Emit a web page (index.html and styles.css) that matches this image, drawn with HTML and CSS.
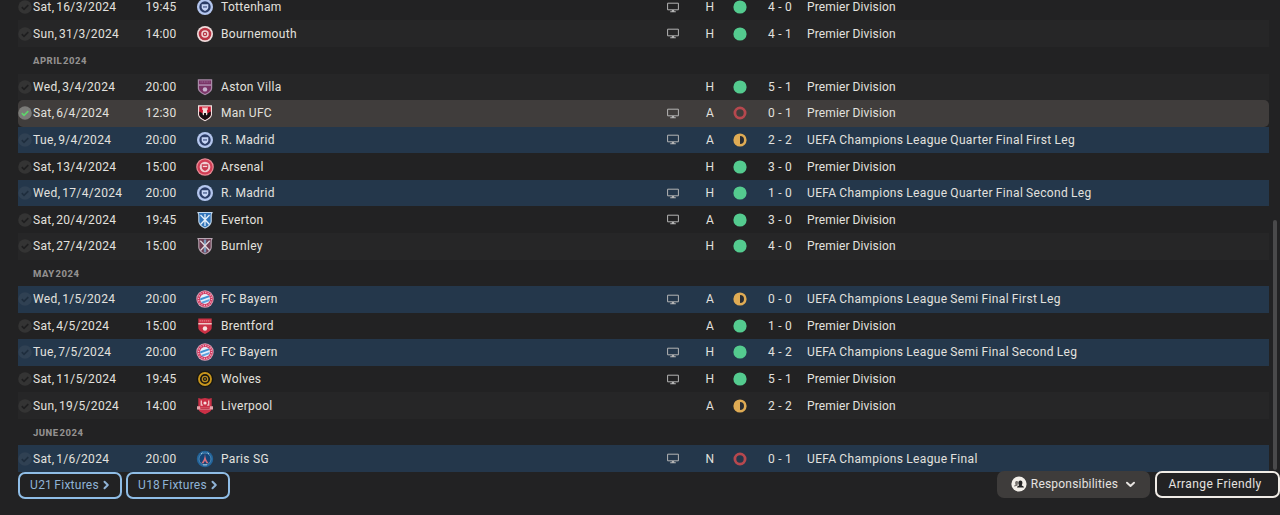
FILE: index.html
```html
<!DOCTYPE html>
<html lang="en">

<head>
    <meta charset="UTF-8">
    <meta name="viewport" content="width=device-width, initial-scale=1.0">
    <title>Fixtures</title>
    <link rel="stylesheet" href="styles.css">
</head>

<body>
    <!-- icons and crests -->
    <svg class="sprite" width="0" height="0">
        <symbol id="check" viewBox="0 0 14 14">
            <circle cx="7" cy="7" r="6.8" fill="var(--check-bg)" />
            <path d="M3.8 7.2l2.2 2.1 4.3-4.1" fill="none" stroke="var(--check-mark)" stroke-width="1.7" />
        </symbol>
        <symbol id="tv" viewBox="0 0 12 11">
            <path d="M.6 1.2h10.8v6.6H.6z" fill="none" stroke="currentColor" stroke-width="1" />
            <path d="M5 8h2l.3 1.3h1.5v.9H3.2v-.9h1.5z" fill="currentColor" />
        </symbol>
        <symbol id="win" viewBox="0 0 14 14">
            <circle cx="7" cy="7" r="6.6" fill="#54cb8f" />
        </symbol>
        <symbol id="loss" viewBox="0 0 14 14">
            <circle cx="7" cy="7" r="5.1" fill="none" stroke="#b6484e" stroke-width="2.8" />
        </symbol>
        <symbol id="draw" viewBox="0 0 14 14">
            <circle cx="7" cy="7" r="6.6" fill="#dfab54" />
            <path d="M7 3a4 4 0 0 1 0 8z" fill="#2a2d33" />
        </symbol>
        <symbol id="blue-round" viewBox="0 0 18 18">
            <circle cx="9" cy="9" r="8" fill="#b4c6ee" />
            <circle cx="9" cy="9" r="5.7" fill="#2b3c66" />
            <path d="M5.7 6.2h6.6v3.1c0 1.7-1.4 2.8-3.3 3.8-1.9-1-3.3-2.1-3.3-3.800z" fill="#c6d4f5" />
            <path d="M7 8.3h4v1.3H7z" fill="#4a5c8c" />
        </symbol>
        <symbol id="bournemouth" viewBox="0 0 18 18">
            <circle cx="9" cy="9" r="8" fill="#f0dcdc" />
            <circle cx="9" cy="9" r="6.3" fill="#b83443" />
            <circle cx="9" cy="9" r="3" fill="#b83443" stroke="#f0d5d6" stroke-width="1.5" />
            <circle cx="9" cy="9" r="1" fill="#f5e4e4" />
        </symbol>
        <symbol id="villa" viewBox="0 0 18 18">
            <path d="M1.8 1.3h14.4v8.7c0 3.3-3 5.2-7.2 7.2-4.2-2-7.2-3.9-7.2-7.2z" fill="#a98aa8" />
            <path d="M3 2.5h12v7.5c0 2.6-2.3 4.2-6 5.9-3.7-1.7-6-3.3-6-5.900z" fill="#7a3467" />
            <path d="M3 6.3h12v1.5H3z" fill="#b08db0" />
            <path d="M4.5 4h9" stroke="#a276a0" stroke-dasharray="1 .7" />
            <circle cx="9" cy="11.4" r="2.2" fill="#c8b2cf" />
        </symbol>
        <symbol id="manufc" viewBox="0 0 18 18">
            <path d="M2 1.3h14v8.900c0 3-2.9 5-7 7-4.1-2-7-4-7-7z" fill="#eee0df" />
            <path d="M3.2 2.5h11.6v7.7c0 2.300-2.300 3.900-5.800 5.700-3.500-1.800-5.800-3.400-5.800-5.700z" fill="#cc1730" />
            <path d="M3.2 7.500l2.800 1.500h6l2.800-1.500v2.900c0 2-2.300 3.700-5.800 5.500-3.500-1.800-5.800-3.500-5.800-5.500z" fill="#180f12" />
            <path d="M6.300 3.200h1.300v1h.8v-1h1.200v1h.8v-1h1.300v2.500l-.8.600.6 4-1.500 1.200V9H8v2.500l-1.500-1.200.6-4-.8-.6z" fill="#f4dfdc" />
        </symbol>
        <symbol id="arsenal" viewBox="0 0 18 18">
            <circle cx="9" cy="9" r="8.8" fill="#e98b96" />
            <circle cx="9" cy="9" r="7.6" fill="#d23e55" />
            <circle cx="9" cy="9" r="5.3" fill="#f0cdd1" />
            <path d="M5.8 6.2h6.4v3c0 1.7-1.4 2.8-3.2 3.7-1.8-.9-3.2-2-3.2-3.700z" fill="#c93b50" />
            <path d="M6.8 7.8h4.4v1.3H6.8z" fill="#f3d5d8" />
        </symbol>
        <symbol id="everton" viewBox="0 0 18 18">
            <path d="M2 1.5h14l-.8 2v6.700c0 3-2.300 5-6.200 6.800-3.900-1.800-6.200-3.800-6.200-6.800V3.500z" fill="#3375b9" stroke="#c3d9ee" stroke-width="1.1" />
            <path d="M9 3v12M4.5 4l9 9.5M13.5 4l-9 9.5" stroke="#e5f0fa" stroke-width="1.3" />
        </symbol>
        <symbol id="burnley" viewBox="0 0 18 18">
            <path d="M2 1.5h14l-.8 2v6.700c0 3-2.300 5-6.200 6.800-3.900-1.800-6.200-3.800-6.200-6.800V3.500z" fill="#6b3b50" stroke="#b9a6b3" stroke-width="1.1" />
            <path d="M9 2.5v13" stroke="#7998b8" stroke-width="2.4" />
            <path d="M4.3 3.8l9.200 9.700M13.700 3.800l-9.200 9.700" stroke="#e2d7dd" stroke-width="1.3" />
        </symbol>
        <symbol id="bayern" viewBox="0 0 18 18">
            <circle cx="9" cy="9" r="8.7" fill="#dba3b7" />
            <circle cx="9" cy="9" r="7.8" fill="#d23960" />
            <circle cx="9" cy="9" r="6.5" fill="none" stroke="#eeb9c7" stroke-width="1.3" stroke-dasharray="1.2 1.3" />
            <circle cx="9" cy="9" r="5" fill="#e4eefa" />
            <path d="M4.3 8.3l8.2-2.8 1.2 1.6-9.5 3.300z" fill="#3e8fd0" />
            <path d="M5 12l8.700-3-.6 2.300-6.400 2.300z" fill="#5ba2dc" />
        </symbol>
        <symbol id="brentford" viewBox="0 0 18 18">
            <path d="M2.3 1.5h13.4v9c0 2.9-2.7 4.5-6.7 6.5-4-2-6.700-3.600-6.700-6.500z" fill="#cb3145" />
            <path d="M2.3 6h13.400v1.500H2.3z" fill="#efc9c8" />
            <path d="M3.5 3.8h11" stroke="#e37a83" stroke-width="1.3" stroke-dasharray="1.4 .7" />
            <circle cx="9" cy="11.5" r="2.2" fill="#f6e2df" />
        </symbol>
        <symbol id="wolves" viewBox="0 0 18 18">
            <circle cx="9" cy="9" r="8.3" fill="#171611" />
            <circle cx="9" cy="9" r="6" fill="none" stroke="#c8961d" stroke-width="1.9" />
            <circle cx="9" cy="9" r="2.7" fill="none" stroke="#b98c20" stroke-width="1.3" />
            <circle cx="9" cy="9" r=".8" fill="#e4b94e" />
        </symbol>
        <symbol id="liverpool" viewBox="0 0 18 18">
            <path d="M2.300 1l2.700.8L9 1l4 .8 2.700-.8v10.300c0 2.700-2.700 4.300-6.700 6-4-1.700-6.700-3.300-6.700-6z" fill="#cb3046" />
            <path d="M1 9.300h3v1.400h10V9.300h3v3.200H1z" fill="#e7a3ab" />
            <path d="M4.3 11.6h9.4" stroke="#bc3144" />
            <path d="M5.3 3.5v4.700h1.600M12.700 3.500v4.700h-1.600" fill="none" stroke="#f0c4c7" stroke-width="1.3" />
            <circle cx="9" cy="6" r="1.6" fill="#f7dfdf" />
        </symbol>
        <symbol id="psg" viewBox="0 0 18 18">
            <circle cx="9" cy="9" r="8.2" fill="#22649b" />
            <circle cx="9" cy="9" r="6" fill="#154477" stroke="#5993bd" stroke-width=".8" />
            <path d="M5 4l1.500-1.300M13 4l-1.500-1.300" stroke="#a9c5db" />
            <path d="M9 3.500c.3 4.200 1.200 7 3.500 9.600l-1.800.4L9 10.700 7.300 13.500l-1.800-.4C7.800 10.500 8.700 7.700 9 3.500z" fill="#d5727f" />
            <path d="M7 14.800h4" stroke="#a9c5db" />
        </symbol>
    </svg>

    <div class="fixtures">
        <div class="row">
            <svg class="check"><use href="#check" /></svg>
            <span class="date">Sat, 16/3/2024</span>
            <span class="time">19:45</span>
            <svg class="crest"><use href="#blue-round" /></svg>
            <span class="team">Tottenham</span>
            <svg class="tv"><use href="#tv" /></svg>
            <span class="venue">H</span>
            <svg class="result"><use href="#win" /></svg>
            <span class="score">4 - 0</span>
            <span class="comp">Premier Division</span>
        </div>
        <div class="row">
            <svg class="check"><use href="#check" /></svg>
            <span class="date">Sun, 31/3/2024</span>
            <span class="time">14:00</span>
            <svg class="crest"><use href="#bournemouth" /></svg>
            <span class="team">Bournemouth</span>
            <svg class="tv"><use href="#tv" /></svg>
            <span class="venue">H</span>
            <svg class="result"><use href="#win" /></svg>
            <span class="score">4 - 1</span>
            <span class="comp">Premier Division</span>
        </div>
        <div class="month">APRIL 2024</div>
        <div class="row">
            <svg class="check"><use href="#check" /></svg>
            <span class="date">Wed, 3/4/2024</span>
            <span class="time">20:00</span>
            <svg class="crest"><use href="#villa" /></svg>
            <span class="team">Aston Villa</span>
            <span class="tv"></span>
            <span class="venue">H</span>
            <svg class="result"><use href="#win" /></svg>
            <span class="score">5 - 1</span>
            <span class="comp">Premier Division</span>
        </div>
        <div class="row selected">
            <svg class="check"><use href="#check" /></svg>
            <span class="date">Sat, 6/4/2024</span>
            <span class="time">12:30</span>
            <svg class="crest"><use href="#manufc" /></svg>
            <span class="team">Man UFC</span>
            <svg class="tv"><use href="#tv" /></svg>
            <span class="venue">A</span>
            <svg class="result"><use href="#loss" /></svg>
            <span class="score">0 - 1</span>
            <span class="comp">Premier Division</span>
        </div>
        <div class="row europe">
            <svg class="check"><use href="#check" /></svg>
            <span class="date">Tue, 9/4/2024</span>
            <span class="time">20:00</span>
            <svg class="crest"><use href="#blue-round" /></svg>
            <span class="team">R. Madrid</span>
            <svg class="tv"><use href="#tv" /></svg>
            <span class="venue">A</span>
            <svg class="result"><use href="#draw" /></svg>
            <span class="score">2 - 2</span>
            <span class="comp">UEFA Champions League Quarter Final First Leg</span>
        </div>
        <div class="row">
            <svg class="check"><use href="#check" /></svg>
            <span class="date">Sat, 13/4/2024</span>
            <span class="time">15:00</span>
            <svg class="crest"><use href="#arsenal" /></svg>
            <span class="team">Arsenal</span>
            <span class="tv"></span>
            <span class="venue">H</span>
            <svg class="result"><use href="#win" /></svg>
            <span class="score">3 - 0</span>
            <span class="comp">Premier Division</span>
        </div>
        <div class="row europe">
            <svg class="check"><use href="#check" /></svg>
            <span class="date">Wed, 17/4/2024</span>
            <span class="time">20:00</span>
            <svg class="crest"><use href="#blue-round" /></svg>
            <span class="team">R. Madrid</span>
            <svg class="tv"><use href="#tv" /></svg>
            <span class="venue">H</span>
            <svg class="result"><use href="#win" /></svg>
            <span class="score">1 - 0</span>
            <span class="comp">UEFA Champions League Quarter Final Second Leg</span>
        </div>
        <div class="row">
            <svg class="check"><use href="#check" /></svg>
            <span class="date">Sat, 20/4/2024</span>
            <span class="time">19:45</span>
            <svg class="crest"><use href="#everton" /></svg>
            <span class="team">Everton</span>
            <svg class="tv"><use href="#tv" /></svg>
            <span class="venue">A</span>
            <svg class="result"><use href="#win" /></svg>
            <span class="score">3 - 0</span>
            <span class="comp">Premier Division</span>
        </div>
        <div class="row">
            <svg class="check"><use href="#check" /></svg>
            <span class="date">Sat, 27/4/2024</span>
            <span class="time">15:00</span>
            <svg class="crest"><use href="#burnley" /></svg>
            <span class="team">Burnley</span>
            <span class="tv"></span>
            <span class="venue">H</span>
            <svg class="result"><use href="#win" /></svg>
            <span class="score">4 - 0</span>
            <span class="comp">Premier Division</span>
        </div>
        <div class="month">MAY 2024</div>
        <div class="row europe">
            <svg class="check"><use href="#check" /></svg>
            <span class="date">Wed, 1/5/2024</span>
            <span class="time">20:00</span>
            <svg class="crest"><use href="#bayern" /></svg>
            <span class="team">FC Bayern</span>
            <svg class="tv"><use href="#tv" /></svg>
            <span class="venue">A</span>
            <svg class="result"><use href="#draw" /></svg>
            <span class="score">0 - 0</span>
            <span class="comp">UEFA Champions League Semi Final First Leg</span>
        </div>
        <div class="row">
            <svg class="check"><use href="#check" /></svg>
            <span class="date">Sat, 4/5/2024</span>
            <span class="time">15:00</span>
            <svg class="crest"><use href="#brentford" /></svg>
            <span class="team">Brentford</span>
            <span class="tv"></span>
            <span class="venue">A</span>
            <svg class="result"><use href="#win" /></svg>
            <span class="score">1 - 0</span>
            <span class="comp">Premier Division</span>
        </div>
        <div class="row europe">
            <svg class="check"><use href="#check" /></svg>
            <span class="date">Tue, 7/5/2024</span>
            <span class="time">20:00</span>
            <svg class="crest"><use href="#bayern" /></svg>
            <span class="team">FC Bayern</span>
            <svg class="tv"><use href="#tv" /></svg>
            <span class="venue">H</span>
            <svg class="result"><use href="#win" /></svg>
            <span class="score">4 - 2</span>
            <span class="comp">UEFA Champions League Semi Final Second Leg</span>
        </div>
        <div class="row">
            <svg class="check"><use href="#check" /></svg>
            <span class="date">Sat, 11/5/2024</span>
            <span class="time">19:45</span>
            <svg class="crest"><use href="#wolves" /></svg>
            <span class="team">Wolves</span>
            <svg class="tv"><use href="#tv" /></svg>
            <span class="venue">H</span>
            <svg class="result"><use href="#win" /></svg>
            <span class="score">5 - 1</span>
            <span class="comp">Premier Division</span>
        </div>
        <div class="row">
            <svg class="check"><use href="#check" /></svg>
            <span class="date">Sun, 19/5/2024</span>
            <span class="time">14:00</span>
            <svg class="crest"><use href="#liverpool" /></svg>
            <span class="team">Liverpool</span>
            <span class="tv"></span>
            <span class="venue">A</span>
            <svg class="result"><use href="#draw" /></svg>
            <span class="score">2 - 2</span>
            <span class="comp">Premier Division</span>
        </div>
        <div class="month">JUNE 2024</div>
        <div class="row europe">
            <svg class="check"><use href="#check" /></svg>
            <span class="date">Sat, 1/6/2024</span>
            <span class="time">20:00</span>
            <svg class="crest"><use href="#psg" /></svg>
            <span class="team">Paris SG</span>
            <svg class="tv"><use href="#tv" /></svg>
            <span class="venue">N</span>
            <svg class="result"><use href="#loss" /></svg>
            <span class="score">0 - 1</span>
            <span class="comp">UEFA Champions League Final</span>
        </div>
        <div class="scrollbar"></div>
    </div>

    <div class="footer">
        <button class="btn link">U21 Fixtures
            <svg width="7" height="10" viewBox="0 0 7 10"><path d="M1.5 1.8L4.8 5 1.5 8.200" /></svg>
        </button>
        <button class="btn link">U18 Fixtures
            <svg width="7" height="10" viewBox="0 0 7 10"><path d="M1.5 1.8L4.8 5 1.5 8.200" /></svg>
        </button>
        <button class="btn filled">
            <svg class="people" width="16" height="16" viewBox="0 0 16 16">
                <circle cx="8" cy="8" r="7.6" fill="#f3efe9" />
                <path d="M3 10.5c0-1.2 1.3-1.5 1.700-2-.9-1.200-.9-3.600 1.100-3.600 1 0 1.200.6 1.200 1.600l-.5 3.300z" fill="#77726e" />
                <path d="M6 11.5c0-1.5 1.700-1.700 2.100-2.300-1.200-1.500-1-4.700 1.300-4.700s2.500 3.200 1.300 4.700c.4.600 2.300.8 2.300 2.300z" fill="#252424" />
            </svg>
            Responsibilities
            <svg class="chevron" width="11" height="8" viewBox="0 0 11 8"><path d="M2 2.700l3.500 3.200L9 2.700" /></svg>
        </button>
        <button class="btn outline">Arrange Friendly</button>
    </div>
</body>

</html>
```
FILE: styles.css
```css
* {
    box-sizing: border-box;
}

body {
    margin: 0;
    height: 515px;
    overflow: hidden;
    background-color: #222223;
    color: #e2e1df;
    font-family: Roboto, "Liberation Sans", sans-serif;
    font-size: 12px;
    letter-spacing: 0.25px;
}

.sprite {
    position: absolute;
}

/* the list is scrolled to its end, so it sticks to the bottom */
.fixtures {
    position: relative;
    display: flex;
    flex-direction: column;
    justify-content: flex-end;
    height: 472px;
    padding: 0 11px 0 18px;
    overflow: hidden;
}

.row {
    --check-bg: #343434;
    --check-mark: #1f1f20;
    display: grid;
    grid-template-columns: 15px 100px 56px 32px 439px 26px 48px 13px 45px 1fr;
    align-items: center;
    flex: none;
    height: 26.57px;
    white-space: nowrap;
}

.row:nth-child(even) {
    background-color: #262627;
}

.row.europe {
    --check-bg: #304153;
    --check-mark: #1f2e3e;
    background-color: #24374b;
}

.row.selected {
    --check-bg: #7b7b78;
    --check-mark: #5ed56b;
    background-color: #403d3c;
    border-radius: 5px;
}

.month {
    flex: none;
    height: 26.57px;
    line-height: 28px;
    padding-left: 15px;
    color: #92908f;
    font-size: 9.5px;
    font-weight: 800;
    letter-spacing: 0.5px;
    word-spacing: -2px;
}

.check {
    width: 14px;
    height: 14px;
}

.date {
    letter-spacing: 0.35px;
    word-spacing: -1.5px;
}

.time,
.venue {
    text-align: center;
}

.crest {
    width: 18px;
    height: 18px;
    margin-left: 7px;
}

.team {
    letter-spacing: 0.3px;
}

.tv {
    width: 12px;
    height: 11px;
    justify-self: center;
    color: #b4b4b4;
}

.result {
    width: 14px;
    height: 14px;
    margin-left: -1px;
}

.score {
    text-align: right;
}

.comp {
    padding-left: 15px;
    letter-spacing: 0.15px;
    word-spacing: -0.5px;
}

.europe .comp {
    letter-spacing: 0.36px;
}

.scrollbar {
    position: absolute;
    top: 220px;
    right: 3px;
    width: 4px;
    height: 250px;
    border-radius: 2px;
    background-color: #4a4a4b;
}

.footer {
    display: flex;
    align-items: flex-start;
    padding-left: 18px;
}

.btn {
    display: flex;
    align-items: center;
    justify-content: center;
    height: 27px;
    padding: 0 0 2px;
    border: 2px solid transparent;
    border-radius: 7px;
    background: none;
    color: #e6e3e0;
    font: inherit;
    letter-spacing: inherit;
    white-space: nowrap;
}

.btn path {
    stroke-linecap: round;
    stroke-linejoin: round;
}

.link {
    width: 104px;
    margin-right: 4px;
    gap: 4px;
    border-color: #8fbde6;
    color: #8fb3d6;
    word-spacing: -1px;
}

.link path,
.chevron path {
    fill: none;
    stroke: currentColor;
    stroke-width: 2;
}

.filled {
    position: relative;
    width: 153px;
    margin: -1px 5px 0 auto;
    gap: 4px;
    background-color: #3e3c3b;
    letter-spacing: 0.2px;
}

.chevron {
    margin-left: 3px;
}

.outline {
    position: relative;
    width: 125px;
    margin-top: -1px;
    border-color: #f0ece6;
    padding-right: 5px;
    letter-spacing: 0.4px;
}
```
